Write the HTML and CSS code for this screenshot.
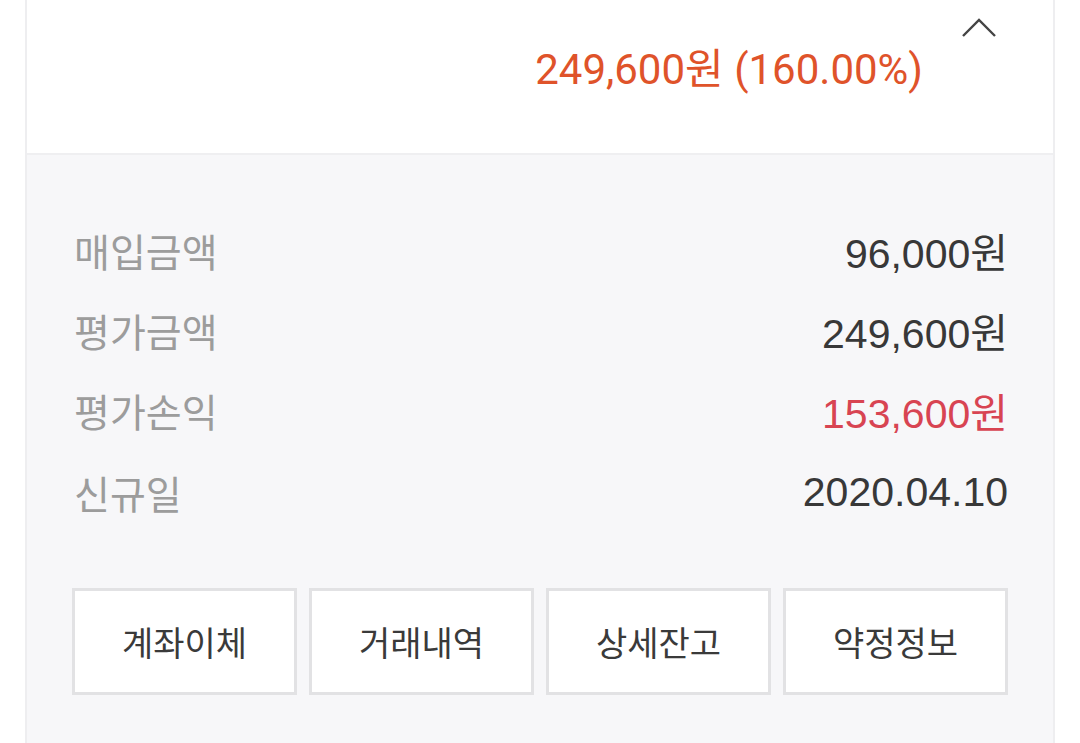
FILE: index.html
```html
<!DOCTYPE html>
<html lang="ko">
<head>
    <meta charset="UTF-8">
    <meta name="viewport" content="width=device-width, initial-scale=1.0">
    <title>계좌 상세</title>
    <link rel="stylesheet" href="styles.css">
</head>
<body>
    <div class="card">
        <div class="summary">
            <div class="amount">249,600원 (160.00%)</div>
            <button class="toggle" aria-label="접기">
                <svg width="36" height="20" viewBox="0 0 36 20">
                    <polyline points="2,18 18,2 34,18" fill="none" stroke="#444" stroke-width="2.4"/>
                </svg>
            </button>
        </div>
        <div class="detail">
            <div class="row">
                <span class="label">매입금액</span>
                <span class="value">96,000원</span>
            </div>
            <div class="row">
                <span class="label">평가금액</span>
                <span class="value">249,600원</span>
            </div>
            <div class="row">
                <span class="label">평가손익</span>
                <span class="value plus">153,600원</span>
            </div>
            <div class="row">
                <span class="label">신규일</span>
                <span class="value">2020.04.10</span>
            </div>
            <div class="actions">
                <button class="action">계좌이체</button>
                <button class="action">거래내역</button>
                <button class="action">상세잔고</button>
                <button class="action">약정정보</button>
            </div>
        </div>
    </div>
</body>
</html>
```

FILE: styles.css
```css
body {
    margin: 0;
    background-color: #fff;
    font-family: "Noto Sans CJK KR", "Noto Sans", sans-serif;
    color: #333;
}
.card {
    margin: 0 25px;
    border-left: 2px solid #eeeef0;
    border-right: 2px solid #eeeef0;
    height: 743px;
    display: flex;
    flex-direction: column;
}
.summary {
    height: 153px;
    border-bottom: 2px solid #efeff1;
    background-color: #fff;
    display: flex;
    justify-content: flex-end;
    align-items: flex-start;
    padding-right: 56px;
}
.amount {
    margin-top: 46px;
    font-family: Roboto, "Noto Sans CJK KR", sans-serif;
    font-size: 42px;
    line-height: 48px;
    color: #df532a;
}
.toggle {
    margin: 18px 0 0 38px;
    padding: 0;
    border: none;
    background: none;
    width: 36px;
    height: 20px;
}
.detail {
    flex: 1;
    background-color: #f7f7f9;
    padding: 55px 45px 0 47px;
}
.row {
    height: 80px;
    display: flex;
    justify-content: space-between;
    align-items: center;
}
.row:nth-child(4) {
    height: 84px;
}
.label {
    font-size: 39px;
    color: #9c9c9c;
}
.value {
    font-family: "Liberation Sans", Arial, "Noto Sans CJK KR", sans-serif;
    font-size: 41px;
    color: #383838;
}
.value.plus {
    color: #d84452;
}
.actions {
    margin: 54px 0 0 -2px;
    display: grid;
    grid-template-columns: repeat(4, 1fr);
    gap: 12px;
}
.action {
    height: 107px;
    background-color: #fff;
    border: 3px solid #e2e2e4;
    font-family: "Noto Sans CJK KR", sans-serif;
    font-size: 34px;
    color: #3a3a3a;
    padding: 0;
}
```
